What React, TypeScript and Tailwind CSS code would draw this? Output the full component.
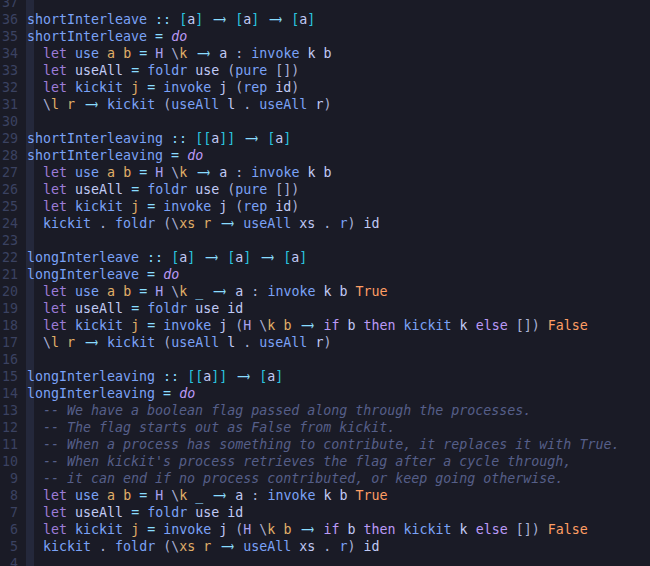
import React from "react";

type Tok = [string, string] | string;

const FN = "text-[#7aa2f7]";
const KW = "text-[#9d7cd8]";
const KW2 = "text-[#bb9af7]";
const DO = "text-[#bb9af7] italic";
const P = "text-[#e0af68]";
const OP = "text-[#89ddff]";
const BR = "text-[#2ac3de]";
const V = "text-[#c0caf5]";
const G = "text-[#a9b1d6]";
const BOOL = "text-[#ff9e64]";
const CON = "text-[#a9a1f0]";
const CM = "text-[#565f89] italic";
const AR = "ARROW";

const A: Tok = ["->", AR];

const sig = (name: string, multi: boolean): Tok[] =>
  multi
    ? [[name, FN], " ", ["::", OP], " ", ["[[", BR], ["a", V], ["]]", BR], " ", A, " ", ["[", BR], ["a", V], ["]", BR]]
    : [[name, FN], " ", ["::", OP], " ", ["[", BR], ["a", V], ["]", BR], " ", A, " ", ["[", BR], ["a", V], ["]", BR], " ", A, " ", ["[", BR], ["a", V], ["]", BR]];

const def = (name: string): Tok[] => [[name, FN], " ", ["=", OP], " ", ["do", DO]];

const useShort: Tok[] = ["  ", ["let", KW], " ", ["use", FN], " ", ["a", P], " ", ["b", P], " ", ["=", OP], " ", ["H", CON], " ", ["\\", G], ["k", P], " ", A, " ", ["a", V], " ", [":", G], " ", ["invoke", FN], " ", ["k", V], " ", ["b", V]];
const useAllShort: Tok[] = ["  ", ["let", KW], " ", ["useAll", V], " ", ["=", OP], " ", ["foldr", FN], " ", ["use", V], " ", ["(", G], ["pure", FN], " ", ["[])", G]];
const kickShort: Tok[] = ["  ", ["let", KW], " ", ["kickit", FN], " ", ["j", P], " ", ["=", OP], " ", ["invoke", FN], " ", ["j", V], " ", ["(", G], ["rep", FN], " ", ["id", V], [")", G]];
const lr: Tok[] = ["  ", ["\\", G], ["l", P], " ", ["r", P], " ", A, " ", ["kickit", FN], " ", ["(", G], ["useAll", FN], " ", ["l", V], " ", [".", G], " ", ["useAll", FN], " ", ["r", V], [")", G]];
const foldLine: Tok[] = ["  ", ["kickit", FN], " ", [".", G], " ", ["foldr", FN], " ", ["(\\", G], ["xs", P], " ", ["r", P], " ", A, " ", ["useAll", FN], " ", ["xs", V], " ", [".", G], " ", ["r", FN], [")", G], " ", ["id", V]];

const useLong: Tok[] = ["  ", ["let", KW], " ", ["use", FN], " ", ["a", P], " ", ["b", P], " ", ["=", OP], " ", ["H", CON], " ", ["\\", G], ["k", P], " ", ["_", OP], " ", A, " ", ["a", V], " ", [":", G], " ", ["invoke", FN], " ", ["k", V], " ", ["b", V], " ", ["True", BOOL]];
const useAllLong: Tok[] = ["  ", ["let", KW], " ", ["useAll", V], " ", ["=", OP], " ", ["foldr", FN], " ", ["use", V], " ", ["id", V]];
const kickLong: Tok[] = ["  ", ["let", KW], " ", ["kickit", FN], " ", ["j", P], " ", ["=", OP], " ", ["invoke", FN], " ", ["j", V], " ", ["(", G], ["H", CON], " ", ["\\", G], ["k", P], " ", ["b", P], " ", A, " ", ["if", KW2], " ", ["b", V], " ", ["then", KW2], " ", ["kickit", FN], " ", ["k", V], " ", ["else", KW2], " ", ["[])", G], " ", ["False", BOOL]];

const cm = (s: string): Tok[] => ["  ", ["-- " + s, CM]];

const lines: Tok[][] = [
  [],
  sig("shortInterleave", false),
  def("shortInterleave"),
  useShort,
  useAllShort,
  kickShort,
  lr,
  [],
  sig("shortInterleaving", true),
  def("shortInterleaving"),
  useShort,
  useAllShort,
  kickShort,
  foldLine,
  [],
  sig("longInterleave", false),
  def("longInterleave"),
  useLong,
  useAllLong,
  kickLong,
  lr,
  [],
  sig("longInterleaving", true),
  def("longInterleaving"),
  cm("We have a boolean flag passed along through the processes."),
  cm("The flag starts out as False from kickit."),
  cm("When a process has something to contribute, it replaces it with True."),
  cm("When kickit's process retrieves the flag after a cycle through,"),
  cm("it can end if no process contributed, or keep going otherwise."),
  useLong,
  useAllLong,
  kickLong,
  foldLine,
  [],
];

function Token({ t }: { t: Tok }) {
  if (typeof t === "string") return <span className="whitespace-pre">{t}</span>;
  if (t[1] === AR)
    return (
      <span className="inline-flex w-[2ch] justify-center overflow-visible text-[#89ddff]">
        <span className="inline-block scale-x-[0.68] font-['DejaVu_Sans',sans-serif]">⟶</span>
      </span>
    );
  return <span className={"whitespace-pre " + t[1]}>{t[0]}</span>;
}

export default function App() {
  return (
    <div className="h-[566px] w-[650px] overflow-hidden bg-[#1a1b26] font-['DejaVu_Sans_Mono',monospace] text-[13.3px] leading-[17px]">
      <div className="mt-[-6px] flex">
        <div className="w-[26px] shrink-0 pr-[8px] text-right text-[#3b4261]">
          {lines.map((_, i) => (
            <div key={i} className="h-[17px]">
              {37 - i}
            </div>
          ))}
        </div>
        <div className="flex-1 bg-[linear-gradient(to_right,#24283b_8px,transparent_8px)] pl-[1px]">
          {lines.map((l, i) => (
            <div key={i} className="h-[17px] whitespace-pre">
              {l.map((t, j) => (
                <Token key={j} t={t} />
              ))}
            </div>
          ))}
        </div>
      </div>
    </div>
  );
}
